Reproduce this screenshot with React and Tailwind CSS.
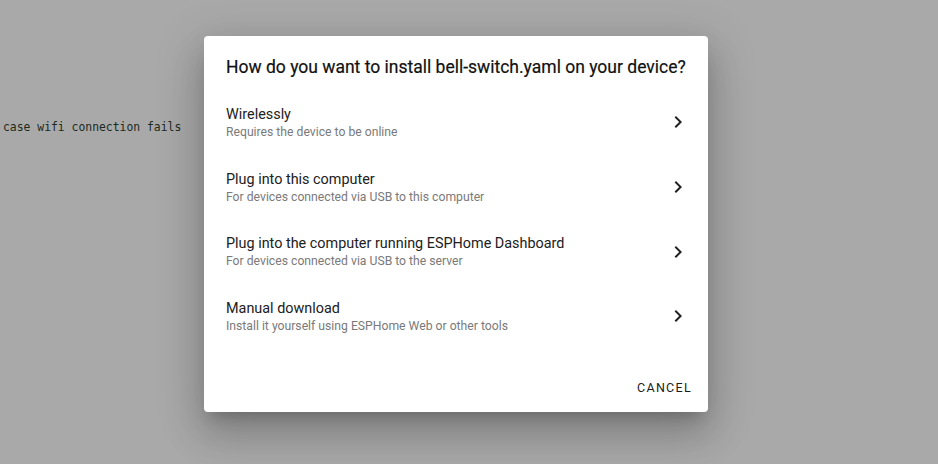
const OPTIONS = [
  { title: 'Wirelessly', subtitle: 'Requires the device to be online' },
  { title: 'Plug into this computer', subtitle: 'For devices connected via USB to this computer' },
  { title: 'Plug into the computer running ESPHome Dashboard', subtitle: 'For devices connected via USB to the server' },
  { title: 'Manual download', subtitle: 'Install it yourself using ESPHome Web or other tools' },
];

const ChevronRight = () => (
  <svg width="24" height="24" viewBox="0 0 24 24" className="shrink-0 text-[#212121]">
    <path fill="currentColor" d="M10 6L8.59 7.41 13.17 12l-4.58 4.59L10 18l6-6z" />
  </svg>
);

export default function App() {
  return (
    <div className="relative w-full h-[464px] overflow-hidden bg-[#a9a9a9] font-['Roboto',sans-serif]">
      {/* page behind the scrim */}
      <div className="pt-[119px] pl-[3px] font-['DejaVu_Sans_Mono',monospace] text-[11.4px] leading-[16px] text-[#1c2a1c] whitespace-pre">
        case wifi connection fails
      </div>

      {/* dialog */}
      <div className="absolute left-[204px] top-[36px] w-[504px] h-[376px] bg-white rounded-[4px] shadow-[0_11px_15px_-7px_rgba(0,0,0,0.2),0_24px_38px_3px_rgba(0,0,0,0.14),0_9px_46px_8px_rgba(0,0,0,0.12)] flex flex-col">
        <h2 className="pt-[19px] px-[22px] text-[17.5px] leading-[24px] font-normal text-[#111111] whitespace-nowrap [-webkit-text-stroke:0.2px_#111111]">
          How do you want to install bell-switch.yaml on your device?
        </h2>

        <div className="mt-[11px] flex flex-col">
          {OPTIONS.map((opt) => (
            <div key={opt.title} className="h-[64.7px] flex items-center justify-between pl-[22px] pr-[18px] cursor-pointer">
              <div className="flex flex-col">
                <span className="text-[14.4px] leading-[19px] text-[#212121]">{opt.title}</span>
                <span className="text-[12.2px] leading-[16px] text-[#7a7a7a]">{opt.subtitle}</span>
              </div>
              <ChevronRight />
            </div>
          ))}
        </div>

        <div className="mt-auto flex justify-end pr-[10px] pb-[6px]">
          <button className="h-[36px] px-[6px] text-[12.5px] font-normal tracking-[1.3px] text-[#1a1a1a] uppercase">
            Cancel
          </button>
        </div>
      </div>
    </div>
  );
}
